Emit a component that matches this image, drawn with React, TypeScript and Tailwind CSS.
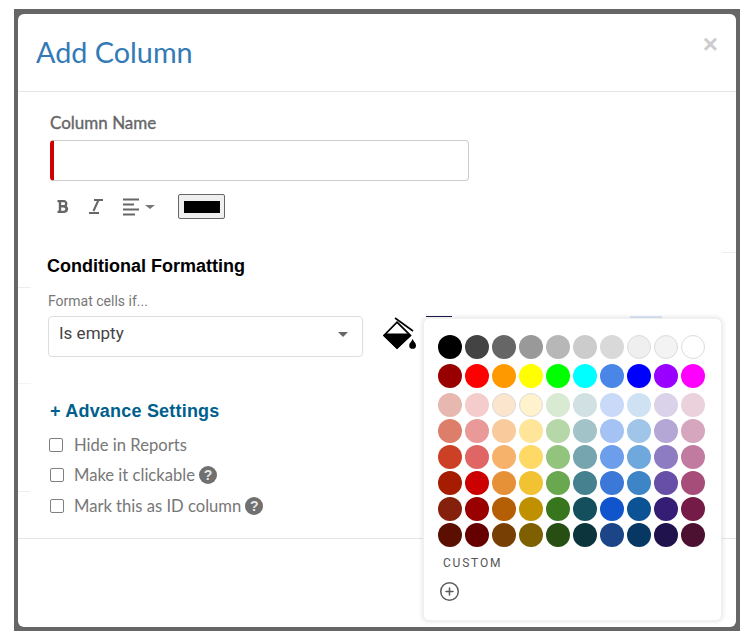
import { CirclePlus } from "lucide-react";
import { FaBold } from "react-icons/fa";

const rows: string[][] = [
  ["#000000","#434343","#666666","#999999","#b7b7b7","#cccccc","#d9d9d9","#efefef","#f3f3f3","#ffffff"],
  ["#980000","#ff0000","#ff9900","#ffff00","#00ff00","#00ffff","#4a86e8","#0000ff","#9900ff","#ff00ff"],
  ["#e6b8af","#f4cccc","#fce5cd","#fff2cc","#d9ead3","#d0e0e3","#c9daf8","#cfe2f3","#d9d2e9","#ead1dc"],
  ["#dd7e6b","#ea9999","#f9cb9c","#ffe599","#b6d7a8","#a2c4c9","#a4c2f4","#9fc5e8","#b4a7d6","#d5a6bd"],
  ["#cc4125","#e06666","#f6b26b","#ffd966","#93c47d","#76a5af","#6d9eeb","#6fa8dc","#8e7cc3","#c27ba0"],
  ["#a61c00","#cc0000","#e69138","#f1c232","#6aa84f","#45818e","#3c78d8","#3d85c6","#674ea7","#a64d79"],
  ["#85200c","#990000","#b45f06","#bf9000","#38761d","#134f5c","#1155cc","#0b5394","#351c75","#741b47"],
  ["#5b0f00","#660000","#783f04","#7f6000","#274e13","#0c343d","#1c4587","#073763","#20124d","#4c1130"],
];

const bordered = new Set(["#efefef", "#f3f3f3", "#ffffff", "#fce5cd", "#fff2cc"]);
const lato = "font-['Lato','Liberation_Sans',sans-serif]";

function Help() {
  return (
    <span className="ml-[4px] flex h-[18px] w-[18px] items-center justify-center rounded-full bg-[#707070] font-['Liberation_Sans',sans-serif] text-[14px] font-bold leading-none text-[#e8e8e8]">
      ?
    </span>
  );
}

function Check({ label, help, gap }: { label: string; help?: boolean; gap: string }) {
  return (
    <div className="flex h-[24px] items-center">
      <span className="h-[14px] w-[14px] rounded-[2px] border border-[#808080] bg-white" />
      <span className={`${lato} ${gap} text-[16.6px] leading-[24px] text-[#777777]`}>{label}</span>
      {help && <Help />}
    </div>
  );
}

function ItalicIcon() {
  return (
    <svg width="16" height="15" viewBox="0 0 16 15" className="ml-[18px] shrink-0">
      <path d="M6 1 H15 M10.5 1 L5.5 12 M1 14 H11" stroke="#666666" strokeWidth="2" fill="none" />
    </svg>
  );
}

function AlignIcon() {
  return (
    <svg width="16" height="18" viewBox="0 0 16 18" className="ml-[19px] shrink-0">
      <path d="M0 1.5 H16 M0 6.5 H11 M0 11.5 H16 M0 16.5 H12" stroke="#666666" strokeWidth="2" fill="none" />
    </svg>
  );
}

function Bucket() {
  return (
    <svg width="33" height="34" viewBox="0 0 33 34" className="ml-[20px] mt-[1px] shrink-0">
      <path d="M12 1 L30 14" stroke="#000" strokeWidth="1.6" fill="none" />
      <path d="M14 5.2 L27.4 18.4 L14 31 L1 18.4 Z" fill="#fff" stroke="#000" strokeWidth="1.8" />
      <path d="M2.5 16.5 H26 L28 18.4 L14 32 L0.4 18.4 Z" fill="#000" />
      <path d="M29.6 22 C31 25 33 26 33 28.4 A3.4 3.4 0 0 1 26.2 28.4 C26.2 26 28.4 25 29.6 22 Z" fill="#000" />
    </svg>
  );
}

function Palette() {
  return (
    <div className="absolute left-[406px] top-[305px] flex h-[301px] w-[297px] flex-col rounded-[5px] bg-white pl-[14px] pt-[16px] shadow-[0_0_0_1px_#f0f0f0,0_0_4px_2px_rgba(0,0,0,0.1)]">
      <div className="flex flex-col">
        {rows.map((row, i) => (
          <div key={i} className={`flex gap-[3px] ${i === 0 ? "" : i <= 2 ? "mt-[5px]" : "mt-[2px]"}`}>
            {row.map((c) => (
              <span
                key={c}
                style={{ backgroundColor: c }}
                className={`h-[24px] w-[24px] rounded-full ${bordered.has(c) ? "border border-[#dcdcdc]" : ""}`}
              />
            ))}
          </div>
        ))}
      </div>
      <div className="ml-[5px] mt-[8px] font-['Roboto',sans-serif] text-[12px] font-normal leading-[16px] tracking-[1.8px] text-[#555555]">
        CUSTOM
      </div>
      <CirclePlus size={21} strokeWidth={1.7} className="ml-[1px] mt-[10px] text-[#5a5a5a]" />
    </div>
  );
}

export default function App() {
  return (
    <div className="h-[644px] w-[750px] overflow-hidden bg-white pl-[14px] pt-[9px]">
      <div className="h-[622px] w-[726px] bg-[#666666] pb-[4px] pl-[4px] pr-[4px] pt-[5px]">
        <div className="relative flex h-full flex-col rounded-[6px] bg-white">
          <header className="flex h-[78px] shrink-0 items-start justify-between border-b border-[#e5e5e5] pl-[18px] pr-[18px]">
            <h1 className={`${lato} mt-[19px] text-[28.8px] font-normal leading-[38px] text-[#337ab7]`}>Add Column</h1>
            <span className="mt-[15px] font-['Liberation_Sans',sans-serif] text-[26px] font-bold leading-[30px] text-[#cccccc]">×</span>
          </header>

          <main className="flex h-[447px] shrink-0 flex-col border-b border-[#e5e5e5]">
            <div className="pl-[32px]">
              <div className={`${lato} mt-[19px] text-[17px] font-normal leading-[24px] text-[#666666] [-webkit-text-stroke:0.35px_#666666]`}>Column Name</div>
              <div className="mt-[5px] h-[41px] w-[419px] rounded-[4px] border border-l-[4px] border-[#cccccc] border-l-[#cc0000] bg-white" />
              <div className="mt-[13px] flex h-[25px] items-center">
                <FaBold size={15} className="ml-[5px] text-[#666666]" />
                <ItalicIcon />
                <AlignIcon />
                <span className="ml-[6px] h-0 w-0 border-x-[5px] border-t-[4px] border-x-transparent border-t-[#777777]" />
                <span className="ml-[23px] flex h-[25px] w-[47px] items-center justify-center rounded-[2px] border border-[#666666] bg-[#efefef]">
                  <span className="h-[12px] w-[36px] bg-black" />
                </span>
              </div>
            </div>

            <div className="pl-[30px]">
              <h2 className="-ml-[1px] mt-[35px] font-['Liberation_Sans',sans-serif] text-[18px] font-bold leading-[24px] text-black">Conditional Formatting</h2>
              <div className="mt-[15px] font-['Roboto',sans-serif] text-[14px] leading-[16px] text-[#777777]">Format cells if...</div>
              <div className="mt-[7px] flex items-start">
                <div className="flex h-[41px] w-[315px] items-center justify-between rounded-[4px] border border-[#dddddd] pb-[5px] pl-[10px] pr-[14px]">
                  <span className="font-['Roboto',sans-serif] text-[17px] text-[#444444]">Is empty</span>
                  <span className="h-0 w-0 border-x-[5px] border-t-[5px] border-x-transparent border-t-[#666666]" />
                </div>
                <Bucket />
              </div>
              <div className="mt-[42px] pl-[2px] font-['Liberation_Sans',sans-serif] text-[18px] font-bold leading-[24px] tracking-[0.2px] text-[#005f8c]">+ Advance Settings</div>
            </div>

            <div className="mt-[10px] pl-[31px]"><Check label="Hide in Reports" gap="ml-[11px]" /></div>
            <div className="mt-[6px] pl-[32px]"><Check label="Make it clickable" help gap="ml-[10px]" /></div>
            <div className="mt-[7px] pl-[32px]"><Check label="Mark this as ID column" help gap="ml-[10px]" /></div>
          </main>

          <div className="absolute left-0 top-[273px] h-[1px] w-[13px] bg-[#eeeeee]" />
          <div className="absolute left-0 top-[369px] h-[1px] w-[13px] bg-[#f4f4f4]" />
          <div className="absolute left-0 top-[477px] h-[1px] w-[12px] bg-[#eeeeee]" />
          <div className="absolute right-0 top-[238px] h-[1px] w-[14px] bg-[#eeeeee]" />
          <div className="absolute left-[408px] top-[302px] h-[1px] w-[26px] bg-[#1a1a4a]" />
          <div className="absolute left-[612px] top-[302px] h-[3px] w-[32px] bg-[#dce6f5]" />
          <Palette />
        </div>
      </div>
    </div>
  );
}
